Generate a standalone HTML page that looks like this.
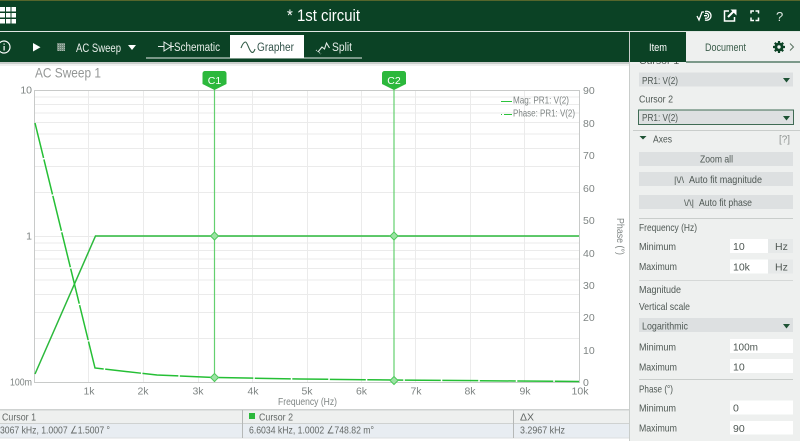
<!DOCTYPE html>
<html><head><meta charset="utf-8"><title>1st circuit</title>
<style>
html,body{margin:0;padding:0;width:800px;height:441px;overflow:hidden;background:#fff}
svg{display:block;filter:blur(.3px)}
text{font-family:"Liberation Sans",sans-serif}
.g{font-size:10.5px;fill:#7f8584}
.p{font-size:10.5px;fill:#4f5854}
.s{font-size:10.5px;fill:#636866}
.w{font-size:10.5px;fill:#fff}
.grid line{stroke:#ebebeb;stroke-width:1}
</style></head><body>
<svg width="800" height="441" viewBox="0 0 800 441" xmlns="http://www.w3.org/2000/svg">
<defs><pattern id="dots" width="2" height="2" patternUnits="userSpaceOnUse"><rect width="2" height="2" fill="#6f8a7a"/><rect width="1" height="1" fill="#a6b9ae"/></pattern></defs>
<rect width="800" height="441" fill="#fff"/>
<!-- top bar -->
<rect width="800" height="31" fill="#0b4225"/>
<rect width="800" height="1" fill="#56662c"/>
<rect y="31" width="800" height="1" fill="#dfe6e2"/>
<g fill="#fff">
<rect x="0" y="7" width="5" height="4.5"/><rect x="6" y="7" width="4.5" height="4.5"/><rect x="11.500" y="7" width="4.500" height="4.500"/>
<rect x="0" y="13" width="5" height="4.500"/><rect x="6" y="13" width="4.500" height="4.500"/><rect x="11.500" y="13" width="4.500" height="4.500"/>
<rect x="0" y="19" width="5" height="4.500"/><rect x="6" y="19" width="4.500" height="4.500"/><rect x="11.500" y="19" width="4.500" height="4.500"/>
</g>
<text x="287" y="21" font-size="17" fill="#fff" textLength="73" lengthAdjust="spacingAndGlyphs">* 1st circuit</text>
<!-- right icons -->
<g fill="none" stroke="#fff" stroke-width="1.300">
<path d="M697 16l2 4 3-8h2"/>
<path d="M705 11.500a4.500 4.500 0 1 1 0 8.500M705 13.500a2.500 2.500 0 1 1 0 4.500M704 15.700h3"/>
<path d="M729 11h-4.500v10h10v-4" stroke-width="1.500"/>
<path d="M728 17l6-6" stroke-width="2"/>
<path d="M751 13.500v-2.500h3M755.500 11h3v2.500M758.500 17.500v3h-3M754 20.500h-3v-3" stroke-width="1.500"/>
</g>
<path d="M730.500 9.500h6v6z" fill="#fff"/>
<text x="776" y="21" font-size="13" fill="#dfe6e2">?</text>
<!-- toolbar -->
<rect y="32" width="629" height="30" fill="#0b4225"/>
<rect y="62" width="629" height="2" fill="#c9cdcb"/><rect y="64" width="629" height="2" fill="#eff0ef"/>
<circle cx="4" cy="47" r="6" fill="none" stroke="#fff" stroke-width="1.200"/>
<rect x="3.500" y="46" width="1.200" height="4.500" fill="#fff"/><rect x="3.500" y="43.500" width="1.200" height="1.200" fill="#fff"/>
<path d="M33 43l7.500 4.200-7.500 4.300z" fill="#fff"/>
<rect x="57" y="43" width="8" height="8" fill="url(#dots)"/>
<text x="76" y="52" font-size="12" fill="#e9efeb" textLength="45" lengthAdjust="spacingAndGlyphs">AC Sweep</text>
<path d="M128 45h8l-4 5z" fill="#fff"/>
<rect x="146" y="57.500" width="216" height="1" fill="#e8eeea"/>
<rect x="230" y="35" width="74" height="23" fill="#fff"/>
<g fill="none" stroke="#e8eeea" stroke-width="1">
<path d="M158 46.500h6M164 42v9l7-4.500zM171 42v9M171 46.500h3"/>
<path d="M241 48c1.500-4 3-6 4.500-6s3 6 5 9 3.500 1 4.500-2" stroke="#2f5a44" stroke-width="1.100"/>
<path d="M318 52l4-5 2.500 2 2-6 3 5" stroke-width="1.100"/>
<path d="M316 50l5 4" stroke-width="1" stroke-dasharray="1 1"/>
</g>
<text x="174" y="51" font-size="11.500" fill="#e8eeea" textLength="46" lengthAdjust="spacingAndGlyphs">Schematic</text>
<text x="257" y="51" font-size="11.500" fill="#33534a" textLength="37" lengthAdjust="spacingAndGlyphs">Grapher</text>
<text x="332" y="51" font-size="11.500" fill="#e8eeea" textLength="20" lengthAdjust="spacingAndGlyphs">Split</text>
<!-- plot -->
<text x="35" y="77.500" font-size="14" fill="#939695" textLength="66" lengthAdjust="spacingAndGlyphs">AC Sweep 1</text>
<g class="grid">
<line x1="35" x2="579" y1="97" y2="97"/><line x1="35" x2="579" y1="104.500" y2="104.500"/><line x1="35" x2="579" y1="113" y2="113"/><line x1="35" x2="579" y1="122.500" y2="122.500"/><line x1="35" x2="579" y1="134" y2="134"/><line x1="35" x2="579" y1="148.500" y2="148.500"/><line x1="35" x2="579" y1="166.500" y2="166.500"/><line x1="35" x2="579" y1="192.500" y2="192.500"/><line x1="35" x2="579" y1="236.500" y2="236.500"/>
<line x1="35" x2="579" y1="243" y2="243"/><line x1="35" x2="579" y1="250.500" y2="250.500"/><line x1="35" x2="579" y1="259" y2="259"/><line x1="35" x2="579" y1="268.500" y2="268.500"/><line x1="35" x2="579" y1="280" y2="280"/><line x1="35" x2="579" y1="294.500" y2="294.500"/><line x1="35" x2="579" y1="312.500" y2="312.500"/><line x1="35" x2="579" y1="338.500" y2="338.500"/>
<line y1="90" y2="382" x1="88.500" x2="88.500"/><line y1="90" y2="382" x1="143.500" x2="143.500"/><line y1="90" y2="382" x1="198.500" x2="198.500"/><line y1="90" y2="382" x1="252.500" x2="252.500"/><line y1="90" y2="382" x1="307.500" x2="307.500"/><line y1="90" y2="382" x1="361.500" x2="361.500"/><line y1="90" y2="382" x1="415.500" x2="415.500"/><line y1="90" y2="382" x1="470.500" x2="470.500"/><line y1="90" y2="382" x1="524.500" x2="524.500"/>
</g>
<rect x="34.500" y="90.500" width="545" height="292" fill="none" stroke="#c8cac9"/>
<g class="g" text-anchor="end"><text x="32" y="93.500">10</text><text x="32" y="239.500">1</text><text x="32" y="385.500" textLength="22" lengthAdjust="spacingAndGlyphs">100m</text></g>
<g class="g" text-anchor="middle"><text x="89" y="394.500">1k</text><text x="143" y="394.500">2k</text><text x="198" y="394.500">3k</text><text x="253" y="394.500">4k</text><text x="307" y="394.500">5k</text><text x="361.500" y="394.500">6k</text><text x="416" y="394.500">7k</text><text x="470" y="394.500">8k</text><text x="525" y="394.500">9k</text><text x="580" y="394.500">10k</text></g>
<text x="278" y="405" class="g" textLength="59" lengthAdjust="spacingAndGlyphs">Frequency (Hz)</text>
<g class="g"><text x="583" y="94">90</text><text x="583" y="127">80</text><text x="583" y="159">70</text><text x="583" y="192">60</text><text x="583" y="224">50</text><text x="583" y="257">40</text><text x="583" y="289">30</text><text x="583" y="321">20</text><text x="583" y="354">10</text><text x="583" y="386">0</text></g>
<text transform="translate(617,218) rotate(90)" class="g" textLength="37" lengthAdjust="spacingAndGlyphs">Phase (°)</text>
<!-- legend -->
<line x1="501" x2="512" y1="101.500" y2="101.500" stroke="#2cc33c"/>
<text x="513" y="103.500" class="g" textLength="56" lengthAdjust="spacingAndGlyphs">Mag: PR1: V(2)</text>
<line x1="501" x2="512" y1="114.500" y2="114.500" stroke="#2cc33c" stroke-dasharray="1 2 8 0"/>
<text x="513" y="116.500" class="g" textLength="62" lengthAdjust="spacingAndGlyphs">Phase: PR1: V(2)</text>
<!-- curves -->
<polyline points="35,374 95.500,236 579,236" fill="none" stroke="#2cb93c" stroke-width="1.500"/>
<polyline points="35,123 95,368 157,375 214,377.500 300,379 394,380 579,381.500" fill="none" stroke="#25bf35" stroke-width="1.500" stroke-dasharray="36 1.500"/>
<!-- cursors -->
<line x1="214.500" x2="214.500" y1="88" y2="382" stroke="#63d06f" stroke-width="1.200"/>
<line x1="394" x2="394" y1="88" y2="382" stroke="#63d06f" stroke-width="1.200"/>
<g fill="#9ce3a4" stroke="#4cc95a" stroke-width="1"><path d="M214.500 232l4 4-4 4-4-4z"/><path d="M394 232l4 4-4 4-4-4z"/><path d="M214.500 373.500l4 4-4 4-4-4z"/><path d="M394 376.500l4 4-4 4-4-4z"/></g>
<g fill="#2cb83c"><path d="M205 71h19a2.500 2.500 0 0 1 2.500 2.500v10.500l-12 6-12-6v-10.500a2.500 2.500 0 0 1 2.500-2.500z"/><path d="M384.500 71h19a2.500 2.500 0 0 1 2.500 2.500v10.500l-12 6-12-6v-10.500a2.500 2.500 0 0 1 2.500-2.500z"/></g>
<text x="214.500" y="84" text-anchor="middle" class="w">C1</text><text x="394" y="84" text-anchor="middle" class="w">C2</text>
<!-- bottom table -->
<rect y="409" width="629" height="1.500" fill="#cfd2d1"/>
<rect y="410.500" width="629" height="13" fill="#eef0ef"/>
<rect y="423" width="629" height="1" fill="#cfd2d1"/>
<rect y="424" width="629" height="14" fill="#e8edf2"/>
<rect y="437.500" width="629" height="1" fill="#dcdfe0"/>
<rect x="242" y="410" width="1" height="28" fill="#b5b8b7"/>
<rect x="513" y="410" width="1" height="28" fill="#b5b8b7"/>
<rect x="249" y="413" width="6" height="6" fill="#2cb83c"/>
<text x="2" y="420.500" class="s" textLength="34" lengthAdjust="spacingAndGlyphs">Cursor 1</text>
<text x="259" y="420.500" class="s" textLength="34" lengthAdjust="spacingAndGlyphs">Cursor 2</text>
<text x="520" y="420.500" class="s">ΔX</text>
<text x="0" y="433.500" class="s" textLength="110" lengthAdjust="spacingAndGlyphs">3067 kHz, 1.0007 ∠1.5007 °</text>
<text x="249" y="433.500" class="s" textLength="125" lengthAdjust="spacingAndGlyphs">6.6034 kHz, 1.0002 ∠748.82 m°</text>
<text x="520" y="433.500" class="s" textLength="45" lengthAdjust="spacingAndGlyphs">3.2967 kHz</text>
<!-- right panel -->
<rect x="629" y="32" width="171" height="409" fill="#eef0ef"/>
<rect x="629" y="32" width="1" height="409" fill="#c9cdcb"/>
<text x="639" y="64" class="p">Cursor 1</text>
<rect x="630" y="32" width="56" height="30" fill="#0b4225"/>
<rect x="686" y="32" width="114" height="30" fill="#eef0ef"/>
<rect x="686" y="61.500" width="114" height="1" fill="#0b4225"/>
<text x="649" y="51" font-size="11" fill="#fff" textLength="18" lengthAdjust="spacingAndGlyphs">Item</text>
<text x="705" y="51" font-size="11" fill="#3a5c4a" textLength="41" lengthAdjust="spacingAndGlyphs">Document</text>
<g fill="#0b4225"><circle cx="779" cy="47" r="4.500"/><g stroke="#0b4225" stroke-width="2.200"><path d="M779 41v12M773 47h12M774.800 42.800l8.400 8.400M783.200 42.800l-8.400 8.400"/></g><circle cx="779" cy="47" r="1.700" fill="#eef0ef"/></g>
<path d="M790 43.500l3.500 3.500-3.500 3.500" fill="none" stroke="#58705f" stroke-width="1"/>
<!-- selects -->
<rect x="639" y="72.500" width="154" height="14" fill="#dde0e1"/>
<text x="642" y="84" class="p" textLength="36" lengthAdjust="spacingAndGlyphs">PR1: V(2)</text>
<path d="M783 78h7l-3.500 4.500z" fill="#1e5234"/>
<text x="639" y="102.500" class="p" textLength="34" lengthAdjust="spacingAndGlyphs">Cursor 2</text>
<rect x="638.500" y="110" width="155" height="14.500" fill="#dde0e1" stroke="#3f6b54"/>
<text x="642" y="121" class="p" textLength="36" lengthAdjust="spacingAndGlyphs">PR1: V(2)</text>
<path d="M783 116h7l-3.500 4.500z" fill="#1e5234"/>
<rect x="633" y="130" width="167" height="1" fill="#c9cdcb"/>
<path d="M639.500 136h7l-3.500 3.500z" fill="#1e5234"/>
<text x="653" y="142.500" class="p" textLength="19" lengthAdjust="spacingAndGlyphs">Axes</text>
<text x="779" y="142.500" font-size="10.500" fill="#8b908e" textLength="11" lengthAdjust="spacingAndGlyphs">[?]</text>
<rect x="639" y="152" width="154" height="14" fill="#dde0e1"/>
<text x="700" y="162.500" class="p" textLength="33" lengthAdjust="spacingAndGlyphs">Zoom all</text>
<rect x="639" y="172" width="154" height="14" fill="#dde0e1"/>
<text x="674" y="183" class="p" textLength="10" lengthAdjust="spacingAndGlyphs" style="font-size:9px">|\/\</text>
<text x="689" y="183" class="p" textLength="73" lengthAdjust="spacingAndGlyphs">Auto fit magnitude</text>
<rect x="639" y="195" width="154" height="14" fill="#dde0e1"/>
<text x="684" y="206" class="p" textLength="10" lengthAdjust="spacingAndGlyphs" style="font-size:9px">\/\|</text>
<text x="699" y="206" class="p" textLength="53" lengthAdjust="spacingAndGlyphs">Auto fit phase</text>
<rect x="639" y="218" width="154" height="1" fill="#c9cdcb"/>
<text x="639" y="231" class="p" textLength="58" lengthAdjust="spacingAndGlyphs">Frequency (Hz)</text>
<text x="639" y="250" class="p" textLength="37" lengthAdjust="spacingAndGlyphs">Minimum</text>
<rect x="730" y="239" width="38" height="14" fill="#fff"/><rect x="768" y="239" width="25" height="14" fill="#e6e9e9"/>
<text x="733" y="250" class="p">10</text><text x="775" y="250" class="p">Hz</text>
<text x="639" y="270" class="p" textLength="38" lengthAdjust="spacingAndGlyphs">Maximum</text>
<rect x="730" y="259.500" width="38" height="14" fill="#fff"/><rect x="768" y="259.500" width="25" height="14" fill="#e6e9e9"/>
<text x="733" y="270.500" class="p">10k</text><text x="775" y="270.500" class="p">Hz</text>
<rect x="639" y="280" width="154" height="1" fill="#d5d8d7"/>
<text x="639" y="293" class="p" textLength="42" lengthAdjust="spacingAndGlyphs">Magnitude</text>
<text x="639" y="310" class="p" textLength="51" lengthAdjust="spacingAndGlyphs">Vertical scale</text>
<rect x="639" y="318" width="154" height="14" fill="#dde0e1"/>
<text x="642" y="329.500" class="p" textLength="46" lengthAdjust="spacingAndGlyphs">Logarithmic</text>
<path d="M783 324h7l-3.500 4.500z" fill="#1e5234"/>
<text x="639" y="350.500" class="p" textLength="37" lengthAdjust="spacingAndGlyphs">Minimum</text>
<rect x="730" y="339" width="63" height="14" fill="#fff"/><text x="733" y="350.500" class="p" textLength="25" lengthAdjust="spacingAndGlyphs">100m</text>
<text x="639" y="370.500" class="p" textLength="38" lengthAdjust="spacingAndGlyphs">Maximum</text>
<rect x="730" y="359" width="63" height="14" fill="#fff"/><text x="733" y="370.500" class="p">10</text>
<rect x="639" y="379" width="154" height="1" fill="#c9cdcb"/>
<text x="639" y="392.500" class="p" textLength="34" lengthAdjust="spacingAndGlyphs">Phase (°)</text>
<text x="639" y="411.500" class="p" textLength="37" lengthAdjust="spacingAndGlyphs">Minimum</text>
<rect x="730" y="400.500" width="63" height="14" fill="#fff"/><text x="733" y="411.500" class="p">0</text>
<text x="639" y="431.500" class="p" textLength="38" lengthAdjust="spacingAndGlyphs">Maximum</text>
<rect x="730" y="421" width="63" height="13.500" fill="#fff"/><text x="733" y="432" class="p">90</text>
</svg>
</body></html>
